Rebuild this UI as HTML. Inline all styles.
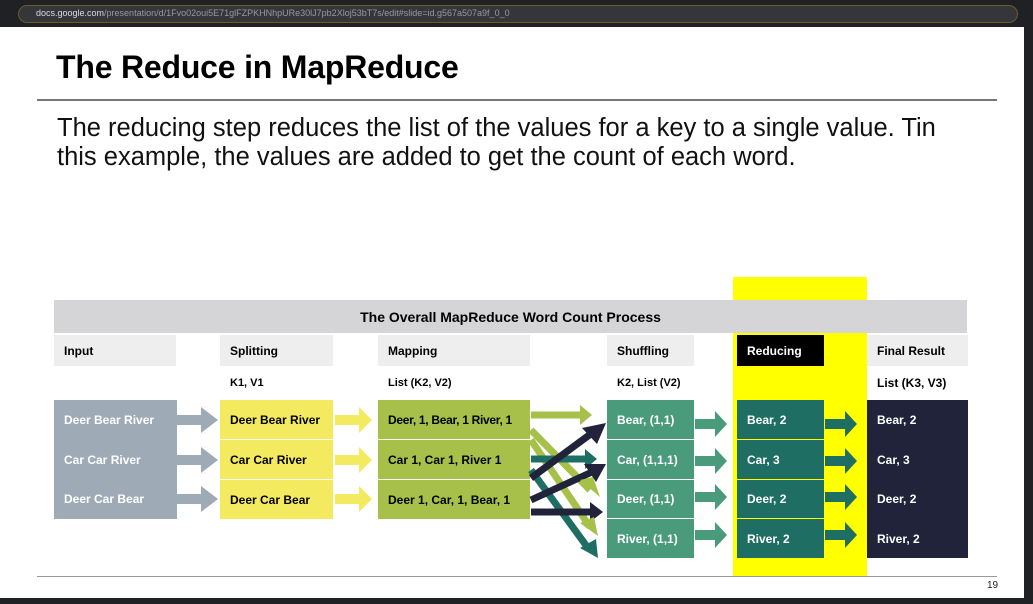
<!DOCTYPE html>
<html><head><style>
body{margin:0;width:1033px;height:604px;overflow:hidden;background:#fff;font-family:"Liberation Sans",Arial,sans-serif;position:relative}
.a{position:absolute}
.b{font-weight:bold;font-size:12px;display:flex;align-items:center;padding-left:10px;box-sizing:border-box;white-space:nowrap}
</style></head><body>
<div class="a" style="left:0;top:0;width:1033px;height:27px;background:#202124"></div>
<div class="a" style="left:18px;top:5px;width:1000px;height:18px;border-radius:9px;background:#35363a;border:1px solid #6b5a2a;box-sizing:border-box"></div>
<div class="a" style="left:36px;top:8px;font-size:9px;color:#ddd">docs.google.com<span style="color:#999">/presentation/d/1Fvo02oui5E71glFZPKHNhpURe30lJ7pb2Xloj53bT7s/edit#slide=id.g567a507a9f_0_0</span></div>
<div class="a" style="left:1024px;top:27px;width:9px;height:577px;background:#202124"></div>
<div class="a" style="left:0;top:598px;width:1033px;height:6px;background:#202124"></div>
<div class="a" style="left:56px;top:49px;font-size:32px;font-weight:bold;letter-spacing:-0.2px;color:#000">The Reduce in MapReduce</div>
<div class="a" style="left:37px;top:99px;width:960px;height:2px;background:#777"></div>
<div class="a" style="left:57px;top:114px;font-size:25.5px;line-height:29px;color:#111;width:900px">The reducing step reduces the list of the values for a key to a single value. Tin this example, the values are added to get the count of each word.</div>
<div class="a" style="left:733px;top:277px;width:134px;height:300px;background:#ffff00"></div>
<div class="a b" style="left:54px;top:300px;width:913px;height:33px;background:#d5d5d7;justify-content:center;padding:0;font-size:14px">The Overall MapReduce Word Count Process</div>
<div class="a b" style="left:54px;top:335px;width:122px;height:31px;background:#eee">Input</div>
<div class="a b" style="left:220px;top:335px;width:113px;height:31px;background:#eee">Splitting</div>
<div class="a b" style="left:378px;top:335px;width:152px;height:31px;background:#eee">Mapping</div>
<div class="a b" style="left:607px;top:335px;width:87px;height:31px;background:#eee">Shuffling</div>
<div class="a b" style="left:737px;top:335px;width:87px;height:31px;background:#000;color:#fff">Reducing</div>
<div class="a b" style="left:867px;top:335px;width:101px;height:31px;background:#eee">Final Result</div>
<div class="a b" style="left:220px;top:374px;height:18px;font-size:11px">K1, V1</div>
<div class="a b" style="left:378px;top:374px;height:18px;font-size:11px">List (K2, V2)</div>
<div class="a b" style="left:607px;top:374px;height:18px;font-size:11px">K2, List (V2)</div>
<div class="a b" style="left:867px;top:374px;height:18px;font-size:12px">List (K3, V3)</div>
<div class="a" style="left:54px;top:400px;width:123px;height:119px;background:#9eaab6"></div>
<div class="a b" style="left:54px;top:400px;height:40px;color:#fff">Deer Bear River</div>
<div class="a b" style="left:54px;top:440px;height:40px;color:#fff">Car Car River</div>
<div class="a b" style="left:54px;top:479px;height:40px;color:#fff">Deer Car Bear</div>
<div class="a b" style="left:220px;top:400px;width:113px;height:39px;background:#f4ea5f">Deer Bear River</div>
<div class="a b" style="left:220px;top:440px;width:113px;height:39px;background:#f4ea5f">Car Car River</div>
<div class="a b" style="left:220px;top:480px;width:113px;height:39px;background:#f4ea5f">Deer Car Bear</div>
<div class="a b" style="left:378px;top:400px;width:152px;height:39px;background:#a6c049;letter-spacing:-0.3px">Deer, 1, Bear, 1 River, 1</div>
<div class="a b" style="left:378px;top:440px;width:152px;height:39px;background:#a6c049">Car 1, Car 1, River 1</div>
<div class="a b" style="left:378px;top:480px;width:152px;height:39px;background:#a6c049">Deer 1, Car, 1, Bear, 1</div>
<svg class="a" style="left:0;top:0" width="1033" height="604">
<g fill="#9eaab6">
<path d="M177,415h24v-8l17,13l-17,13v-8h-24z"/>
<path d="M177,455h24v-8l17,13l-17,13v-8h-24z"/>
<path d="M177,494h24v-8l17,13l-17,13v-8h-24z"/>
</g>
<g fill="#f4ea5f">
<path d="M335,415h24v-8l13,13l-13,13v-8h-24z"/>
<path d="M335,455h24v-8l13,13l-13,13v-8h-24z"/>
<path d="M335,494h24v-8l13,13l-13,13v-8h-24z"/>
</g>
<g stroke-width="7" fill="none">
<line x1="531" y1="415" x2="580" y2="415" stroke="#a6c049"/>
<line x1="531" y1="430" x2="590" y2="490" stroke="#a6c049"/>
<line x1="531" y1="440" x2="590" y2="527" stroke="#a6c049"/>
<line x1="531" y1="459" x2="585" y2="459" stroke="#1f6e63"/>
<line x1="531" y1="470" x2="588" y2="548" stroke="#1f6e63"/>
<line x1="531" y1="478" x2="592" y2="433" stroke="#20233a"/>
<line x1="531" y1="500" x2="592" y2="472" stroke="#20233a"/>
<line x1="531" y1="512" x2="590" y2="512" stroke="#20233a"/>
</g>
<path d="M580,405l12,10l-12,10z" fill="#a6c049"/>
<path d="M585,449l12,10l-12,10z" fill="#1f6e63"/>
<path d="M590,502l13,10l-13,10z" fill="#20233a"/>
<path d="M580,480l20,17l-7,-20z" fill="#a6c049"/>
<path d="M580,523l18,13l-4,-19z" fill="#a6c049"/>
<path d="M580,548l18,10l-2,-19z" fill="#1f6e63"/>
<path d="M582,428l24,-5l-9,21z" fill="#20233a"/>
<path d="M584,464l22,0l-10,18z" fill="#20233a"/>
<g fill="#4a9b7c">
<path d="M695,419h20v-8l12,13l-12,13v-8h-20z"/>
<path d="M695,456h20v-8l12,13l-12,13v-8h-20z"/>
<path d="M695,492h20v-8l12,13l-12,13v-8h-20z"/>
<path d="M695,530h20v-8l12,13l-12,13v-8h-20z"/>
</g>
<g fill="#1f6e63">
<path d="M825,419h20v-8l12,13l-12,13v-8h-20z"/>
<path d="M825,456h20v-8l12,13l-12,13v-8h-20z"/>
<path d="M825,492h20v-8l12,13l-12,13v-8h-20z"/>
<path d="M825,530h20v-8l12,13l-12,13v-8h-20z"/>
</g>
</svg>
<div class="a b" style="left:607px;top:400px;width:87px;height:39px;background:#4a9b7c;color:#fff">Bear, (1,1)</div>
<div class="a b" style="left:607px;top:440px;width:87px;height:39px;background:#4a9b7c;color:#fff">Car, (1,1,1)</div>
<div class="a b" style="left:607px;top:480px;width:87px;height:38px;background:#4a9b7c;color:#fff">Deer, (1,1)</div>
<div class="a b" style="left:607px;top:519px;width:87px;height:39px;background:#4a9b7c;color:#fff">River, (1,1)</div>
<div class="a b" style="left:737px;top:400px;width:87px;height:39px;background:#1f6e63;color:#fff">Bear, 2</div>
<div class="a b" style="left:737px;top:440px;width:87px;height:39px;background:#1f6e63;color:#fff">Car, 3</div>
<div class="a b" style="left:737px;top:480px;width:87px;height:38px;background:#1f6e63;color:#fff">Deer, 2</div>
<div class="a b" style="left:737px;top:519px;width:87px;height:39px;background:#1f6e63;color:#fff">River, 2</div>
<div class="a" style="left:867px;top:400px;width:101px;height:158px;background:#20233a"></div>
<div class="a b" style="left:867px;top:400px;height:40px;color:#fff">Bear, 2</div>
<div class="a b" style="left:867px;top:440px;height:40px;color:#fff">Car, 3</div>
<div class="a b" style="left:867px;top:479px;height:40px;color:#fff">Deer, 2</div>
<div class="a b" style="left:867px;top:519px;height:39px;color:#fff">River, 2</div>
<div class="a" style="left:37px;top:576px;width:960px;height:1px;background:#999"></div>
<div class="a" style="left:987px;top:580px;font-size:10px;color:#222">19</div>
</body></html>
